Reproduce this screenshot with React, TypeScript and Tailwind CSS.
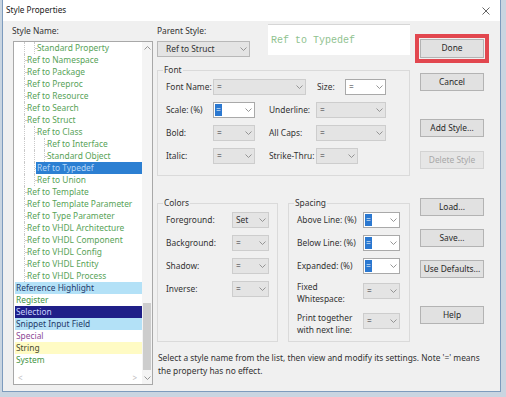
import React from "react";

const Chevron = ({ up = false }: { up?: boolean }) => (
  <svg width="7" height="4" viewBox="0 0 7 4" className="shrink-0">
    <polyline
      points={up ? "0.5,3.5 3.5,0.5 6.5,3.5" : "0.5,0.5 3.5,3.5 6.5,0.5"}
      fill="none"
      stroke="#8a8a8a"
      strokeWidth="0.9"
    />
  </svg>
);

function Drop({
  w,
  value = "=",
  white = false,
  sel = false,
  cls = "",
}: {
  w: string;
  value?: string;
  white?: boolean;
  sel?: boolean;
  cls?: string;
}) {
  return (
    <div
      className={`${w} ${cls} h-[16px] shrink-0 flex items-center border ${
        white ? "bg-white border-[#a9a9a9]" : "bg-[#e4e4e4] border-[#cdcdcd]"
      }`}
    >
      {sel ? (
        <span className="ml-[1px] bg-[#2b78d0] text-white px-[1px] h-[12px] leading-[12px]">=</span>
      ) : (
        <span className="pl-[3px] leading-[12px] text-[#333]">{value}</span>
      )}
      <div className="flex-1" />
      <div className="mr-[2px] flex items-center">
        <Chevron />
      </div>
    </div>
  );
}

type Row = { t: string; l: number; bg?: string; color?: string };

const G = "text-[#58a358]";
const rows: Row[] = [
  { t: "Standard Property", l: 2 },
  { t: "Ref to Namespace", l: 1 },
  { t: "Ref to Package", l: 1 },
  { t: "Ref to Preproc", l: 1 },
  { t: "Ref to Resource", l: 1 },
  { t: "Ref to Search", l: 1 },
  { t: "Ref to Struct", l: 1 },
  { t: "Ref to Class", l: 2 },
  { t: "Ref to Interface", l: 3 },
  { t: "Standard Object", l: 3 },
  { t: "Ref to Typedef", l: 2, bg: "bg-[#2c7fd2]", color: "text-[#b5d6f7]" },
  { t: "Ref to Union", l: 2 },
  { t: "Ref to Template", l: 1 },
  { t: "Ref to Template Parameter", l: 1 },
  { t: "Ref to Type Parameter", l: 1 },
  { t: "Ref to VHDL Architecture", l: 1 },
  { t: "Ref to VHDL Component", l: 1 },
  { t: "Ref to VHDL Config", l: 1 },
  { t: "Ref to VHDL Entity", l: 1 },
  { t: "Ref to VHDL Process", l: 1 },
  { t: "Reference Highlight", l: 0, bg: "bg-[#b3e1f7]", color: "text-[#243c6c]" },
  { t: "Register", l: 0, color: "text-[#449444]" },
  { t: "Selection", l: 0, bg: "bg-[#1f1f88]", color: "text-[#c8d0ff]" },
  { t: "Snippet Input Field", l: 0, bg: "bg-[#b3e1f7]", color: "text-[#1e3a68]" },
  { t: "Special", l: 0, color: "text-[#8d4a96]" },
  { t: "String", l: 0, bg: "bg-[#fffbc4]", color: "text-[#4a4a30]" },
  { t: "System", l: 0, color: "text-[#449444]" },
];

function ListRow({ r }: { r: Row }) {
  return (
    <div className="flex h-[12px] items-stretch">
      {r.l === 0 ? (
        <div className="w-[2px] shrink-0" />
      ) : (
        <>
          <div className="w-[10px] shrink-0" />
          {Array.from({ length: r.l - 1 }).map((_, i) => (
            <div key={i} className="w-[10px] shrink-0 border-l border-dotted border-[#c9c9c9]" />
          ))}
          <div className="w-[3px] shrink-0 border-l border-dotted border-[#c9c9c9] flex items-center">
            <div className="w-full border-t border-dotted border-[#c9c9c9]" />
          </div>
        </>
      )}
      <div
        className={`flex-1 -ml-[1px] pl-[1px] leading-[12px] whitespace-nowrap overflow-hidden ${
          r.bg ?? ""
        } ${r.color ?? G}`}
      >
        {r.t}
      </div>
    </div>
  );
}

function Btn({ children, h = "h-[18px]", disabled = false }: { children: React.ReactNode; h?: string; disabled?: boolean }) {
  return (
    <div
      className={`${h} w-[64px] flex items-center justify-center border ${
        disabled ? "bg-[#e6e6e6] border-[#d3d3d3] text-[#a8a8a8]" : "bg-[#e1e1e1] border-[#b3b3b3] text-[#2a2a2a]"
      }`}
    >
      {children}
    </div>
  );
}

export default function App() {
  return (
    <div className="w-[506px] h-[397px] bg-[#c9d5e1] overflow-hidden font-['Noto_Sans',sans-serif] text-[8.4px] text-[#333] relative">
      <div className="ml-[2px] w-[499px] h-[392px] bg-[#f0f0f0] border border-t-0 border-[#7d9bbd] flex flex-col">
        {/* title bar */}
        <div className="h-[21px] bg-white flex items-center justify-between pl-[3px] pr-[10px] shrink-0">
          <span className="text-[8.2px] text-[#1a1a1a]">Style Properties</span>
          <svg width="8" height="8" viewBox="0 0 8 8">
            <path d="M0.5 0.5 L7.5 7.5 M7.5 0.5 L0.5 7.5" stroke="#555" strokeWidth="0.9" />
          </svg>
        </div>

        {/* body */}
        <div className="flex flex-row flex-1">
          {/* left column */}
          <div className="pl-[10px] flex flex-col">
            <div className="pt-[4px] -ml-[1px] leading-[12px] h-[16px]">Style Name:</div>
            <div className="mt-[4px] w-[140px] h-[344px] border border-[#a8a8a8] bg-white flex">
              <div className="flex-1 flex flex-col min-w-0">
                <div className="flex flex-col">
                  {rows.map((r) => (
                    <ListRow key={r.t} r={r} />
                  ))}
                </div>
                <div className="flex-1" />
                <div className="h-[12px] flex items-center justify-between pl-[4px] pr-[5px] text-[#bdbdbd] text-[8px]">
                  <span>&lt;</span>
                  <span>&gt;</span>
                </div>
              </div>
              <div className="w-[10px] flex flex-col bg-[#f4f4f4]">
                <div className="h-[12px] flex items-center justify-center">
                  <Chevron up />
                </div>
                <div className="flex-1 flex flex-col justify-end">
                  <div className="mx-[1px] h-[67px] mb-[2px] bg-[#cdcdcd]" />
                </div>
                <div className="h-[12px] flex items-center justify-center">
                  <Chevron />
                </div>
              </div>
            </div>
          </div>

          {/* middle column */}
          <div className="ml-[4px] w-[253px] flex flex-col">
            <div className="flex items-start">
              <div className="w-[93px] flex flex-col">
                <div className="pt-[4px] leading-[12px] h-[16px]">Parent Style:</div>
                <div className="mt-[4px] h-[16px] bg-[#e4e4e4] border border-[#b8b8b8] flex items-center pl-[8px] pr-[2px]">
                  <span className="flex-1 leading-[12px]">Ref to Struct</span>
                  <Chevron />
                </div>
              </div>
              <div className="ml-[18px] mt-[3px] h-[31px] flex-1 bg-white border-t border-[#d6d6d6] flex items-center pl-[3px] font-['Liberation_Mono',monospace] text-[10px] text-[#8fc28f]">
                Ref to Typedef
              </div>
            </div>

            {/* Font */}
            <fieldset className="mt-[7px] border border-[#dadada]">
              <legend className="ml-[5px] px-[1px] leading-[12px]">Font</legend>
              <div className="pt-[3px] pl-[8px] pb-[11px] flex flex-col gap-[7px]">
                <div className="flex items-center h-[16px]">
                  <span className="w-[47px] shrink-0">Font Name:</span>
                  <Drop w="w-[93px]" />
                  <span className="ml-[11px] w-[28px] shrink-0">Size:</span>
                  <Drop w="w-[41px]" white />
                </div>
                <div className="flex items-center h-[16px]">
                  <span className="w-[47px] shrink-0">Scale: (%)</span>
                  <Drop w="w-[42px]" white sel />
                  <span className="ml-[14px] w-[47px] shrink-0">Underline:</span>
                  <Drop w="w-[70px]" />
                </div>
                <div className="flex items-center h-[16px]">
                  <span className="w-[47px] shrink-0">Bold:</span>
                  <Drop w="w-[42px]" />
                  <span className="ml-[14px] w-[47px] shrink-0">All Caps:</span>
                  <Drop w="w-[70px]" />
                </div>
                <div className="flex items-center h-[16px]">
                  <span className="w-[47px] shrink-0">Italic:</span>
                  <Drop w="w-[42px]" />
                  <span className="ml-[14px] w-[47px] shrink-0 whitespace-nowrap">Strike-Thru:</span>
                  <Drop w="w-[42px]" />
                </div>
              </div>
            </fieldset>

            {/* Colors & Spacing */}
            <div className="mt-[21px] flex items-stretch gap-[10px]">
              <fieldset className="w-[121px] border border-[#dadada]">
                <legend className="ml-[5px] px-[1px] leading-[12px]">Colors</legend>
                <div className="pt-[3px] pl-[8px] flex flex-col gap-[7px]">
                  {[
                    ["Foreground:", "Set"],
                    ["Background:", "="],
                    ["Shadow:", "="],
                    ["Inverse:", "="],
                  ].map(([l, v]) => (
                    <div key={l} className="flex items-center h-[16px]">
                      <span className="w-[66px] shrink-0">{l}</span>
                      <Drop w="w-[37px]" value={v} />
                    </div>
                  ))}
                </div>
              </fieldset>
              <fieldset className="w-[122px] border border-[#dadada]">
                <legend className="ml-[5px] px-[1px] leading-[12px]">Spacing</legend>
                <div className="pt-[3px] pl-[8px] pb-[5px] flex flex-col gap-[7px]">
                  {["Above Line: (%)", "Below Line: (%)", "Expanded: (%)"].map((l) => (
                    <div key={l} className="flex items-center h-[16px]">
                      <span className="w-[66px] shrink-0 whitespace-nowrap">{l}</span>
                      <Drop w="w-[37px]" white sel />
                    </div>
                  ))}
                  <div className="flex items-start">
                    <span className="w-[66px] shrink-0 leading-[12px]">
                      Fixed
                      <br />
                      Whitespace:
                    </span>
                    <Drop w="w-[37px]" cls="mt-[2px]" />
                  </div>
                  <div className="flex items-start">
                    <span className="w-[66px] shrink-0 leading-[12px] whitespace-nowrap">
                      Print together
                      <br />
                      with next line:
                    </span>
                    <Drop w="w-[37px]" cls="mt-[1px]" />
                  </div>
                </div>
              </fieldset>
            </div>

            <div className="mt-[9px] leading-[13px] pl-[1px] whitespace-nowrap">
              Select a style name from the list, then view and modify its settings. Note '=' means
              <br />
              the property has no effect.
            </div>
          </div>

          {/* right column */}
          <div className="ml-[5px] w-[74px] pt-[13px] flex flex-col">
            <div className="border-[4px] border-[#e2474f] p-[1px]">
              <Btn h="h-[19px]">Done</Btn>
            </div>
            <div className="px-[5px] flex flex-col">
              <div className="mt-[10px]">
                <Btn>Cancel</Btn>
              </div>
              <div className="mt-[28px]">
                <Btn>Add Style...</Btn>
              </div>
              <div className="mt-[14px]">
                <Btn disabled>Delete Style</Btn>
              </div>
              <div className="mt-[29px]">
                <Btn>Load...</Btn>
              </div>
              <div className="mt-[13px]">
                <Btn>Save...</Btn>
              </div>
              <div className="mt-[13px]">
                <Btn>Use Defaults...</Btn>
              </div>
              <div className="mt-[28px]">
                <Btn>Help</Btn>
              </div>
            </div>
          </div>
        </div>
      </div>
    </div>
  );
}
